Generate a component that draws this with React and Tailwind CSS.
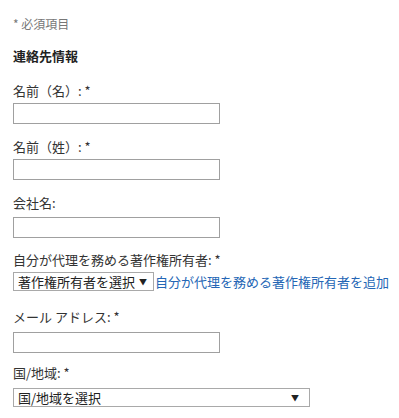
import React from 'react';

const font = { fontFamily: '"Noto Sans CJK JP", "Noto Sans", sans-serif' };

const Label = ({ children }) => (
  <div className="text-[13px] leading-[16px] text-[#333]">{children}</div>
);

const TextInput = ({ className = 'mt-[4px]' }) => (
  <input type="text" className={`block w-[207px] h-[21px] border border-[#a0a0a0] bg-white ${className}`} />
);

export default function App() {
  return (
    <div className="bg-white min-h-[418px] pl-[13px] pt-[16px]" style={font}>
      <div className="text-[12px] leading-[16px] text-[#777]">* 必須項目</div>

      <div className="mt-[16px] text-[13px] leading-[16px] font-bold text-[#222]">連絡先情報</div>

      <div className="mt-[19px]">
        <Label>名前（名）: *</Label>
        <TextInput />
      </div>

      <div className="mt-[15px]">
        <Label>名前（姓）: *</Label>
        <TextInput />
      </div>

      <div className="mt-[15px]">
        <Label>会社名:</Label>
        <TextInput className="mt-[6px]" />
      </div>

      <div className="mt-[14px]">
        <Label>自分が代理を務める著作権所有者: *</Label>
        <div className="flex items-center mt-[4px]">
          <div className="flex items-center w-[141px] h-[19px] border border-[#a9a9a9] bg-white pl-[4px] pr-[6px] text-[13px] text-[#222]">
            <span className="flex-1 leading-none">著作権所有者を選択</span>
            <span className="text-[8px] leading-none">▼</span>
          </div>
          <a href="#" className="ml-[1px] text-[13px] leading-[16px] text-[#2466b5]">自分が代理を務める著作権所有者を追加</a>
        </div>
      </div>

      <div className="mt-[18px]">
        <Label>メール アドレス: *</Label>
        <TextInput className="mt-[7px]" />
      </div>

      <div className="mt-[12px]">
        <Label>国/地域: *</Label>
        <div className="flex items-center w-[297px] h-[19px] mt-[7px] border border-[#a9a9a9] bg-white pl-[4px] pr-[10px] text-[13px] text-[#222]">
          <span className="flex-1 leading-none">国/地域を選択</span>
          <span className="text-[8px] leading-none">▼</span>
        </div>
      </div>
    </div>
  );
}
